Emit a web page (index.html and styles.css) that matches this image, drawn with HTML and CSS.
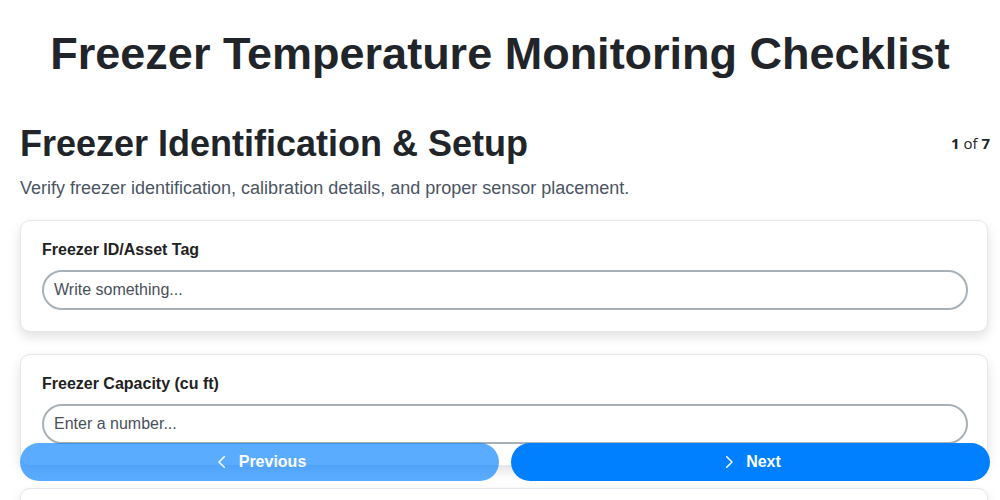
FILE: index.html
```html
<!DOCTYPE html>
<html>
<head>
<meta charset="utf-8">
<link rel="stylesheet" href="styles.css">
</head>
<body>
<h1 class="title">Freezer Temperature Monitoring Checklist</h1>
<main class="page">
  <div class="section-head">
    <h2 class="section-title">Freezer Identification &amp; Setup</h2>
    <div class="counter"><b>1</b> of <b>7</b></div>
  </div>
  <p class="section-desc">Verify freezer identification, calibration details, and proper sensor placement.</p>
  <div class="cards">
    <div class="card">
      <label class="label">Freezer ID/Asset Tag</label>
      <input class="input" type="text" placeholder="Write something...">
    </div>
    <div class="card">
      <label class="label">Freezer Capacity (cu ft)</label>
      <input class="input" type="text" placeholder="Enter a number...">
    </div>
    <div class="card">
      <label class="label">Freezer Location</label>
      <input class="input" type="text" placeholder="Write something...">
    </div>
  </div>
</main>
<nav class="nav">
  <button class="btn btn-prev"><svg class="chev" viewBox="0 0 24 24" width="18" height="18"><path d="M15 5l-7 7 7 7" fill="none" stroke="currentColor" stroke-width="2" stroke-linecap="round" stroke-linejoin="round"/></svg>Previous</button>
  <button class="btn btn-next"><svg class="chev" viewBox="0 0 24 24" width="18" height="18"><path d="M9 5l7 7-7 7" fill="none" stroke="currentColor" stroke-width="2" stroke-linecap="round" stroke-linejoin="round"/></svg>Next</button>
</nav>
</body>
</html>
```
FILE: styles.css
```css
html, body {
  margin: 0;
  padding: 0;
  background: #fff;
  font-family: "Liberation Sans", Arial, sans-serif;
  color: #212529;
}
.title {
  margin: 0;
  padding-top: 27px;
  text-align: center;
  font-size: 45px;
  font-weight: bold;
  line-height: 1.2;
  color: #212529;
}
.page {
  padding: 0 10px 0 20px;
  margin-top: 41px;
}
.section-head {
  display: flex;
  justify-content: space-between;
  align-items: flex-start;
}
.section-title {
  margin: 0;
  font-size: 36px;
  line-height: 1.2;
  font-weight: bold;
}
.counter {
  font-family: "Open Sans", sans-serif;
  font-size: 15px;
  margin-top: 11px;
}
.section-desc {
  margin: 13px 0 0;
  font-size: 18px;
  color: #4b5563;
}
.cards {
  margin-top: 21px;
  display: flex;
  flex-direction: column;
  gap: 22px;
  padding-right: 2px;
}
.card {
  border: 1px solid #e6e6ec;
  border-radius: 10px;
  background: #fff;
  box-shadow: 0 5px 12px rgba(0,0,0,0.12);
  padding: 20px 19px 21px 21px;
  display: flex;
  flex-direction: column;
}
.label {
  font-size: 16px;
  font-weight: bold;
  color: #222;
  margin-bottom: 11px;
}
.input {
  height: 40px;
  box-sizing: border-box;
  border: 2px solid #a8b0b8;
  border-radius: 20px;
  padding: 0 10px;
  font-family: "Liberation Sans", Arial, sans-serif;
  font-size: 16px;
  color: #333;
  outline: none;
}
.input::placeholder {
  color: #4a4f5a;
  opacity: 1;
}
.nav {
  position: fixed;
  left: 20px;
  right: 10px;
  bottom: 19px;
  display: flex;
  gap: 12px;
}
.btn {
  flex: 1;
  height: 38px;
  border: none;
  border-radius: 19px;
  background: #0080ff;
  color: #fff;
  font-family: "Liberation Sans", Arial, sans-serif;
  font-size: 16px;
  font-weight: bold;
  display: flex;
  align-items: center;
  justify-content: center;
  gap: 8px;
}
.btn-prev {
  opacity: 0.65;
}
.chev {
  display: block;
}
```
